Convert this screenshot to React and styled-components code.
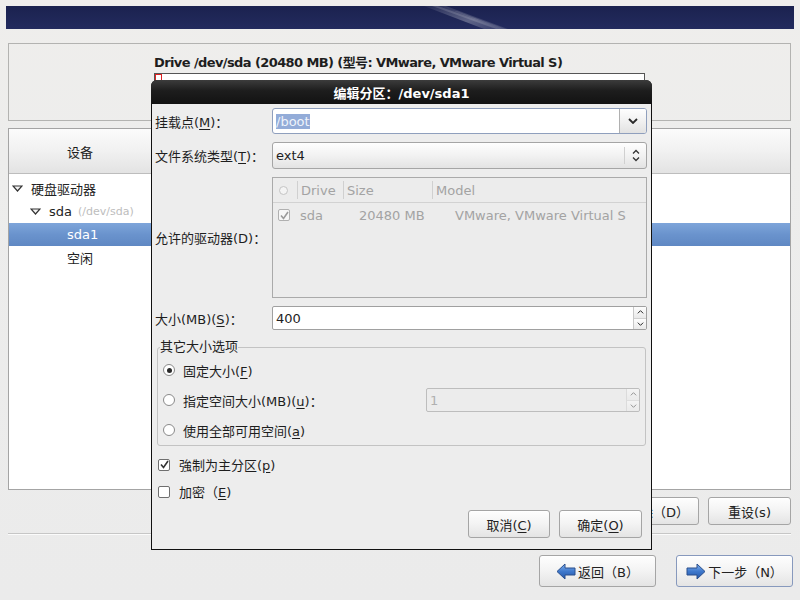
import React from 'react'
import styled, { createGlobalStyle } from 'styled-components'

const GlobalStyle = createGlobalStyle`
  html, body { margin: 0; padding: 0; }
  body {
    background: #ececec;
    font-family: "DejaVu Sans", "Noto Sans CJK SC", sans-serif;
    font-size: 13px;
    color: #1e1e1e;
  }
  * { box-sizing: border-box; }
`

const Screen = styled.div`
  position: relative;
  width: 800px;
  height: 600px;
  overflow: hidden;
  padding-top: 6px;
  background: linear-gradient(#efeeec, #ededec 25%, #ebebeb);
`

const Banner = styled.div`
  position: relative;
  height: 23px;
  margin: 0 6px;
  overflow: hidden;
  background: linear-gradient(#1b224f, #232b5e);
`

const Streak = styled.svg`
  position: absolute;
  left: 0;
  top: 0;
`

const DrivePanel = styled.div`
  height: 78px;
  margin: 14px 9px 0 8px;
  border: 1px solid #b3b3b1;
  display: flex;
  justify-content: center;
  padding-top: 11px;
`

const DriveInner = styled.div`
  width: 491px;
`

const DriveTitle = styled.div`
  font-weight: bold;
  line-height: 16px;
  letter-spacing: -0.6px;
`

const PartBar = styled.div`
  margin-top: 2px;
  height: 40px;
  border: 1px solid #555;
  background: #fff;
`

const PartMark = styled.div`
  width: 7px;
  height: 100%;
  border: 1px solid #d22;
`

const DevicePanel = styled.div`
  height: 362px;
  margin: 7px 9px 0 8px;
  border: 1px solid #a4a4a4;
  background: #fff;
`

const TreeHead = styled.div`
  height: 45px;
  display: flex;
  border-bottom: 1px solid #bdbdbd;
  background: linear-gradient(#fbfbfb, #f1f1f1 50%, #e3e3e3);
`

const HeadCell = styled.div`
  width: ${p => p.$w}px;
  display: flex;
  align-items: center;
  justify-content: center;
`

const Tree = styled.div`
  padding-top: 3px;
`

const TreeRow = styled.div`
  height: 23px;
  display: flex;
  align-items: center;
  padding-left: ${p => p.$indent}px;
  color: ${p => (p.$selected ? '#fff' : '#222')};
  background: ${p => (p.$selected ? 'linear-gradient(#7ea5da, #6a93cd 50%, #5f88c3)' : 'transparent')};
`

const Expander = styled.svg`
  margin-right: 8px;
`

const DevHint = styled.span`
  margin-left: 6px;
  font-size: 11px;
  color: #bdbdbd;
`

const ActionRow = styled.div`
  height: 28px;
  margin-top: 7px;
  padding-right: 9px;
  display: flex;
  justify-content: flex-end;
  gap: 9px;
`

const Separator = styled.div`
  height: 2px;
  margin: 8px 9px 0 8px;
  border-top: 1px solid #c6c6c6;
  border-bottom: 1px solid #fbfbfb;
`

const NavRow = styled.div`
  height: 32px;
  margin-top: 20px;
  padding-right: 7px;
  display: flex;
  justify-content: flex-end;
  gap: 20px;
`

const Button = styled.button`
  width: ${p => p.$w}px;
  height: ${p => p.$h || 28}px;
  padding: 0;
  border: 1px solid ${p => (p.$focus ? '#8799bd' : '#a5a5a5')};
  border-radius: 3px;
  background: linear-gradient(#fefefe, #f3f3f3 50%, #e4e4e4);
  box-shadow: inset 0 1px 0 #fff;
  font: inherit;
  color: #222;
  display: inline-flex;
  align-items: center;
  justify-content: center;
  gap: 2px;
`

const U = styled.span`
  text-decoration: underline;
  text-underline-offset: 2px;
`

/* modal window */
const Dialog = styled.div`
  position: absolute;
  left: 151px;
  top: 80px;
  width: 501px;
  height: 470px;
  display: flex;
  flex-direction: column;
  border-radius: 6px 6px 0 0;
  background: #111;
  padding: 0 1px 1px;
`

const TitleBar = styled.div`
  height: 24px;
  display: flex;
  align-items: center;
  justify-content: center;
  color: #fff;
  font-weight: bold;
  background: linear-gradient(#3c3c3c, #1d1d1d 45%, #121212);
  border-radius: 6px 6px 0 0;
  margin: 0 -1px;
`

const DialogBody = styled.div`
  flex: 1;
  background: #ededed;
  padding: 4px 4px 0 3px;
`

const FormGrid = styled.div`
  display: grid;
  grid-template-columns: 117px 375px;
  row-gap: 8px;
`

const Label = styled.div`
  align-self: center;
  white-space: nowrap;
`

const Combo = styled.div`
  height: ${p => p.$h}px;
  display: flex;
  border: 1px solid ${p => (p.$entry ? '#8f9fbd' : '#a5a5a5')};
  border-radius: 3px;
  background: ${p => (p.$entry ? '#fff' : 'linear-gradient(#fefefe, #f2f2f2 50%, #e3e3e3)')};
  overflow: hidden;
`

const ComboText = styled.div`
  flex: 1;
  display: flex;
  align-items: center;
  padding-left: 3px;
`

const Selected = styled.span`
  background: #93acd8;
  color: #eef3fb;
`

const ComboButton = styled.div`
  width: ${p => p.$w}px;
  display: flex;
  align-items: center;
  justify-content: center;
  border-left: 1px solid ${p => (p.$line ? '#d0d0d0' : '#b0b0b0')};
  margin: ${p => (p.$line ? '4px 0' : '0')};
  background: ${p => (p.$line ? 'transparent' : 'linear-gradient(#fefefe, #f1f1f1 50%, #e2e2e2)')};
`

const DriveList = styled.div`
  height: 121px;
  border: 1px solid #aaa;
  background: #ececec;
  color: #a3a3a3;
`

const ListHead = styled.div`
  height: 25px;
  display: flex;
  align-items: center;
  border-bottom: 1px solid #d2d2d2;
`

const ListCol = styled.div`
  width: ${p => (p.$w ? `${p.$w}px` : 'auto')};
  flex: ${p => (p.$w ? 'none' : '1')};
  height: 18px;
  display: flex;
  align-items: center;
  padding-left: ${p => p.$pad ?? 3}px;
  border-left: ${p => (p.$sep ? '1px solid #d0d0d0' : 'none')};
`

const ListRow = styled.div`
  height: 24px;
  display: flex;
  align-items: center;
`

const BoxMark = styled.div`
  width: ${p => p.$s || 12}px;
  height: ${p => p.$s || 12}px;
  border: 1px solid ${p => p.$color || '#7a7a7a'};
  border-radius: ${p => (p.$round ? '50%' : '2px')};
  background: ${p => p.$bg || '#fff'};
  display: flex;
  align-items: center;
  justify-content: center;
  flex: none;
`

const SpinEntry = styled.div`
  height: 24px;
  width: ${p => (p.$w ? `${p.$w}px` : 'auto')};
  display: flex;
  border: 1px solid ${p => (p.$disabled ? '#bdbdbd' : '#a0a0a0')};
  border-radius: 2px;
  background: ${p => (p.$disabled ? '#ececec' : '#fff')};
  color: ${p => (p.$disabled ? '#b0b0b0' : '#1e1e1e')};
`

const SpinText = styled.div`
  flex: 1;
  display: flex;
  align-items: center;
  padding-left: 3px;
`

const SpinButtons = styled.div`
  width: 13px;
  display: flex;
  flex-direction: column;
  border-left: 1px solid #c8c8c8;
  opacity: ${p => (p.$disabled ? 0.45 : 1)};
`

const SpinHalf = styled.div`
  flex: 1;
  display: flex;
  align-items: center;
  justify-content: center;
  background: linear-gradient(#fdfdfd, #e9e9e9);
  border-top: ${p => (p.$low ? '1px solid #cfcfcf' : 'none')};
`

const Frame = styled.fieldset`
  margin: 9px 0 0 2px;
  width: 489px;
  padding: 0 0 0 2px;
  border: 1px solid #c3c3c3;
  border-radius: 3px;
`

const Legend = styled.legend`
  padding: 0;
  line-height: 16px;
`

const OptionRow = styled.div`
  height: 30px;
  display: flex;
  align-items: center;
  padding-left: 3px;
  padding-right: 5px;
  gap: 8px;
`

const Spacer = styled.div`
  flex: 1;
`

const Dot = styled.div`
  width: 5px;
  height: 5px;
  border-radius: 50%;
  background: #2a2a2a;
`

const CheckRow = styled.div`
  height: 27px;
  display: flex;
  align-items: center;
  padding-left: 3px;
  gap: 9px;
`

const Checks = styled.div`
  margin-top: 5px;
`

const DialogButtons = styled.div`
  margin-top: 5px;
  padding-right: 5px;
  display: flex;
  justify-content: flex-end;
  gap: 9px;
`

const Tick = ({ color = '#333' }) => (
  <svg width="9" height="9" viewBox="0 0 9 9">
    <path d="M1 4.5 L3.5 7.5 L8 1" fill="none" stroke={color} strokeWidth="1.6" />
  </svg>
)

const Chevron = ({ dir = 'down', w = 10, h = 6, color = '#2a2a2a', sw = 1.8 }) => (
  <svg width={w} height={h} viewBox="0 0 10 6">
    <path
      d={dir === 'down' ? 'M1 1 L5 5 L9 1' : 'M1 5 L5 1 L9 5'}
      fill="none"
      stroke={color}
      strokeWidth={sw}
    />
  </svg>
)

const UpDown = () => (
  <svg width="8" height="13" viewBox="0 0 8 13">
    <path d="M1 4.5 L4 1.5 L7 4.5 M1 8.5 L4 11.5 L7 8.5" fill="none" stroke="#333" strokeWidth="1.3" />
  </svg>
)

const Triangle = () => (
  <Expander width="11" height="7" viewBox="0 0 11 7">
    <polygon points="1,1 10,1 5.5,6" fill="#f4f4f4" stroke="#333" strokeWidth="1.2" />
  </Expander>
)

const Arrow = ({ dir }) => (
  <svg width="20" height="17" viewBox="0 0 20 17">
    <defs>
      <linearGradient id={`ag-${dir}`} x1="0" y1="0" x2="0" y2="1">
        <stop offset="0" stopColor="#7fb0ef" />
        <stop offset="0.5" stopColor="#3e78cc" />
        <stop offset="1" stopColor="#2457a8" />
      </linearGradient>
    </defs>
    <polygon
      points={dir === 'left' ? '1,8.5 9,1 9,5 19,5 19,12 9,12 9,16' : '19,8.5 11,1 11,5 1,5 1,12 11,12 11,16'}
      fill={`url(#ag-${dir})`}
      stroke="#2a4f8c"
      strokeWidth="1"
    />
  </svg>
)

function SpinArrows({ disabled }) {
  return (
    <SpinButtons $disabled={disabled}>
      <SpinHalf>
        <Chevron dir="up" w={7} h={4} sw={1.5} />
      </SpinHalf>
      <SpinHalf $low>
        <Chevron dir="down" w={7} h={4} sw={1.5} />
      </SpinHalf>
    </SpinButtons>
  )
}

function App() {
  return (
    <Screen>
      <GlobalStyle />
      <Banner>
        <Streak width="788" height="23" viewBox="0 0 788 23">
          <defs>
            <linearGradient id="st" x1="0" y1="0" x2="1" y2="1">
              <stop offset="0" stopColor="#fff" stopOpacity="0.04" />
              <stop offset="0.6" stopColor="#fff" stopOpacity="0.28" />
              <stop offset="1" stopColor="#fff" stopOpacity="0.08" />
            </linearGradient>
          </defs>
          <polygon points="418,0 436,0 498,23 478,23" fill="url(#st)" />
          <polygon points="426,0 432,0 496,23 490,23" fill="#fff" fillOpacity="0.14" />
          <polygon points="436,0 440,0 502,23 497,23" fill="#fff" fillOpacity="0.12" />
          <polygon points="448,5 452,5 500,23 495,23" fill="#fff" fillOpacity="0.08" />
        </Streak>
      </Banner>

      <DrivePanel>
        <DriveInner>
          <DriveTitle>Drive /dev/sda (20480 MB) (型号: VMware, VMware Virtual S)</DriveTitle>
          <PartBar>
            <PartMark />
          </PartBar>
        </DriveInner>
      </DrivePanel>

      <DevicePanel>
        <TreeHead>
          <HeadCell $w={142}>设备</HeadCell>
        </TreeHead>
        <Tree>
          <TreeRow $indent={3}>
            <Triangle />
            硬盘驱动器
          </TreeRow>
          <TreeRow $indent={21}>
            <Triangle />
            sda<DevHint>(/dev/sda)</DevHint>
          </TreeRow>
          <TreeRow $indent={58} $selected>sda1</TreeRow>
          <TreeRow $indent={58}>空闲</TreeRow>
        </Tree>
      </DevicePanel>

      <ActionRow>
        <Button $w={82}>创建(C)</Button>
        <Button $w={82}>编辑(E)</Button>
        <Button $w={82}>删除（D）</Button>
        <Button $w={83}>重设(s)</Button>
      </ActionRow>

      <Separator />

      <NavRow>
        <Button $w={117} $h={32}>
          <Arrow dir="left" />
          返回（B）
        </Button>
        <Button $w={117} $h={32} $focus>
          <Arrow dir="right" />
          下一步（N）
        </Button>
      </NavRow>

      <Dialog>
        <TitleBar>编辑分区：/dev/sda1</TitleBar>
        <DialogBody>
          <FormGrid>
            <Label>
              挂载点(<U>M</U>)：
            </Label>
            <Combo $h={26} $entry>
              <ComboText>
                <Selected>/boot</Selected>
              </ComboText>
              <ComboButton $w={27}>
                <Chevron />
              </ComboButton>
            </Combo>

            <Label>
              文件系统类型(<U>T</U>)：
            </Label>
            <Combo $h={27}>
              <ComboText>ext4</ComboText>
              <ComboButton $w={22} $line>
                <UpDown />
              </ComboButton>
            </Combo>

            <Label>允许的驱动器(D)：</Label>
            <DriveList>
              <ListHead>
                <ListCol $w={24} $pad={6}>
                  <BoxMark $s={9} $round $color="#c4c4c4" $bg="#f4f4f4" />
                </ListCol>
                <ListCol $w={46} $sep>Drive</ListCol>
                <ListCol $w={89} $sep>Size</ListCol>
                <ListCol $sep>Model</ListCol>
              </ListHead>
              <ListRow>
                <ListCol $w={27} $pad={5}>
                  <BoxMark $color="#b0b0b0" $bg="#f6f6f6">
                    <Tick color="#9a9a9a" />
                  </BoxMark>
                </ListCol>
                <ListCol $w={59} $pad={0}>sda</ListCol>
                <ListCol $w={96} $pad={0}>20480 MB</ListCol>
                <ListCol $pad={0}>VMware, VMware Virtual S</ListCol>
              </ListRow>
            </DriveList>

            <Label>
              大小(MB)(<U>S</U>)：
            </Label>
            <SpinEntry>
              <SpinText>400</SpinText>
              <SpinArrows />
            </SpinEntry>
          </FormGrid>

          <Frame>
            <Legend>其它大小选项</Legend>
            <OptionRow>
              <BoxMark $round $color="#8a8a8a">
                <Dot />
              </BoxMark>
              <span>
                固定大小(<U>F</U>)
              </span>
            </OptionRow>
            <OptionRow>
              <BoxMark $round $color="#8a8a8a" />
              <span>
                指定空间大小(MB)(<U>u</U>)：
              </span>
              <Spacer />
              <SpinEntry $w={214} $disabled>
                <SpinText>1</SpinText>
                <SpinArrows disabled />
              </SpinEntry>
            </OptionRow>
            <OptionRow>
              <BoxMark $round $color="#8a8a8a" />
              <span>
                使用全部可用空间(<U>a</U>)
              </span>
            </OptionRow>
          </Frame>

          <Checks>
            <CheckRow>
              <BoxMark $s={12} $color="#6f6f6f">
                <Tick />
              </BoxMark>
              <span>
                強制为主分区(<U>p</U>)
              </span>
            </CheckRow>
            <CheckRow>
              <BoxMark $s={12} $color="#6f6f6f" />
              <span>
                加密（<U>E</U>)
              </span>
            </CheckRow>
          </Checks>

          <DialogButtons>
            <Button $w={82}>
              <span>
                取消(<U>C</U>)
              </span>
            </Button>
            <Button $w={83}>
              <span>
                确定(<U>O</U>)
              </span>
            </Button>
          </DialogButtons>
        </DialogBody>
      </Dialog>
    </Screen>
  )
}

export default App
